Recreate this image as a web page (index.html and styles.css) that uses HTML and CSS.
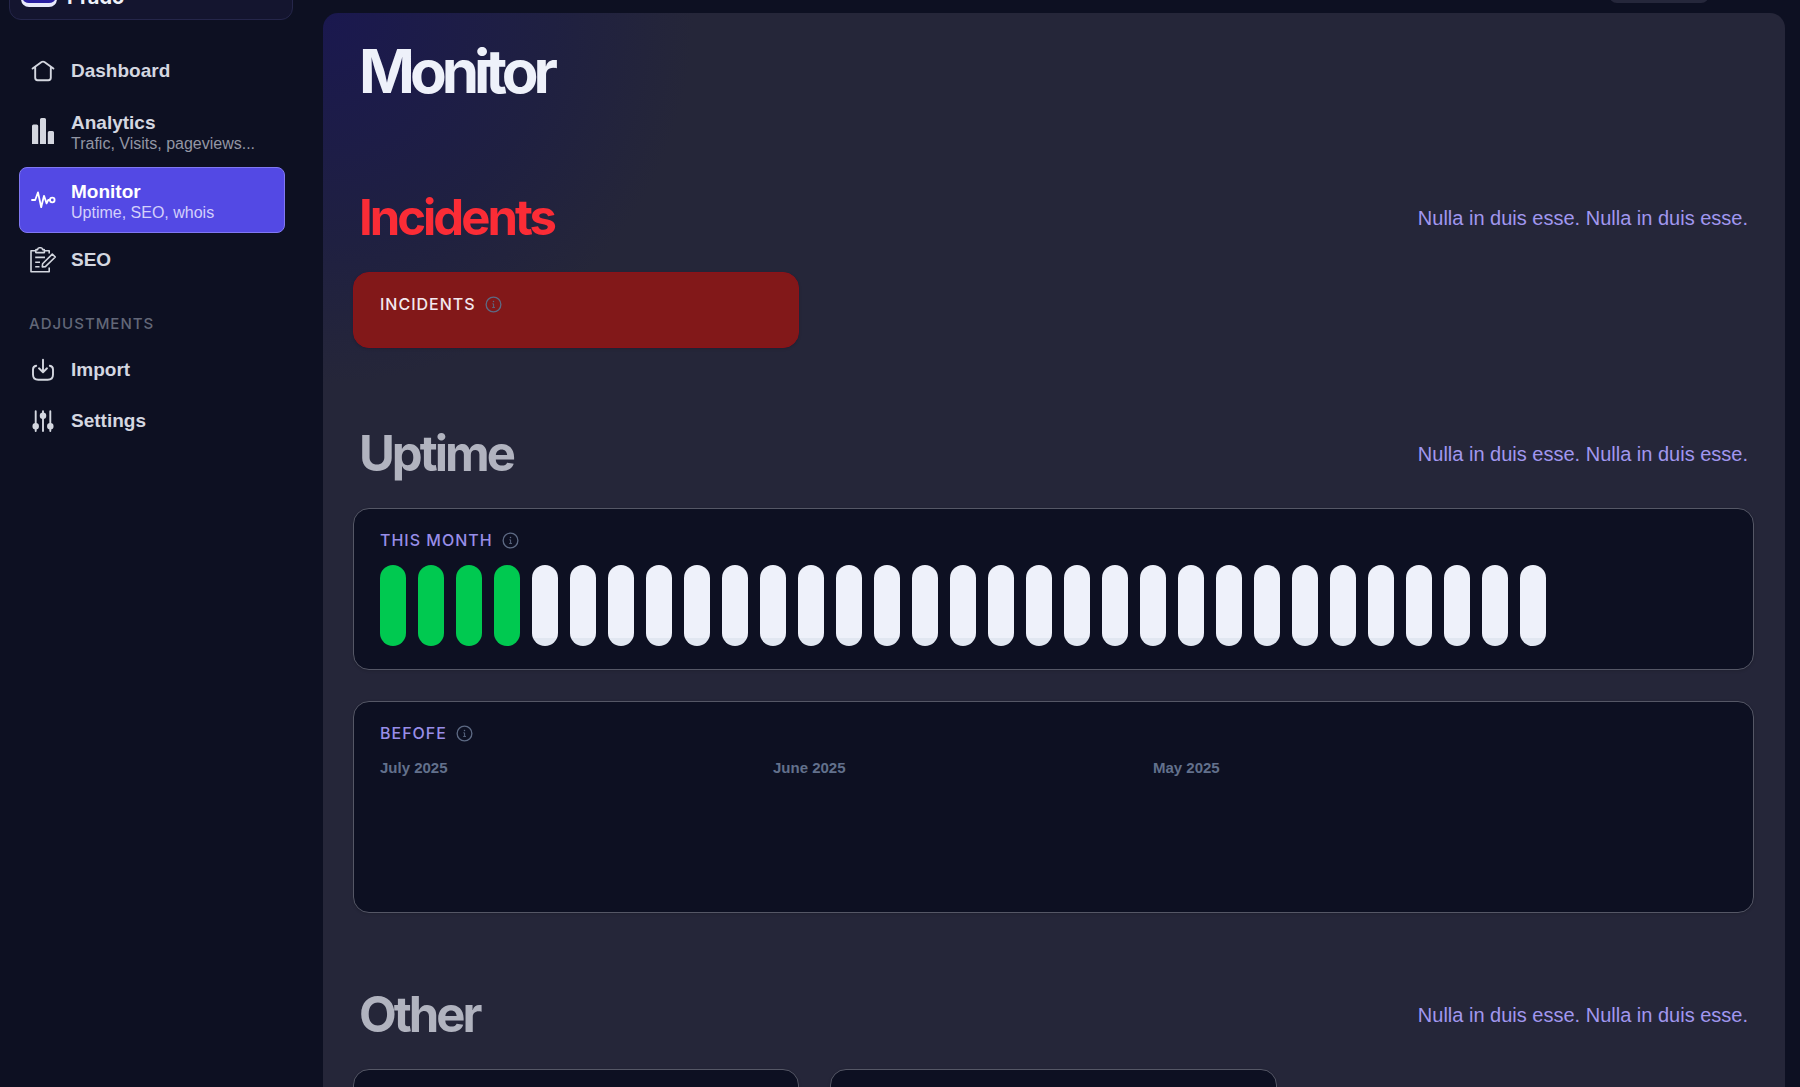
FILE: index.html
```html
<!DOCTYPE html>
<html lang="en">
<head>
<meta charset="utf-8">
<meta name="viewport" content="width=device-width, initial-scale=1">
<title>Monitor</title>
<link rel="stylesheet" href="styles.css">
</head>
<body>
<svg class="sprite" aria-hidden="true">
  <symbol id="info" viewBox="0 0 18 18">
    <circle cx="9" cy="9" r="7.8" fill="none" stroke="currentColor" stroke-width="1.4"/>
    <circle cx="9" cy="5.9" r=".8" fill="currentColor"/>
    <path d="M7.8 8.3H9.1V12M7.6 12.1H10.6" fill="none" stroke="currentColor" stroke-width="1"/>
  </symbol>
</svg>
<div class="app">
  <aside class="sidebar">
    <div class="brand">
      <span class="brand-logo"></span>
      <span class="brand-name">Prado</span>
    </div>
    <nav class="nav">
      <a class="nav-item" href="#">
        <svg class="icon" viewBox="0 0 26 26" fill="none" stroke="currentColor" stroke-width="1.9" stroke-linecap="round" stroke-linejoin="round"><path d="M2.6 10.6 11.6 4.1Q13 3.1 14.4 4.1L23.4 10.6M5.2 9V19.8Q5.2 22.2 7.6 22.2H18.4Q20.8 22.2 20.8 19.8V9"/></svg>
        <span class="nav-text"><span class="nav-title">Dashboard</span></span>
      </a>
      <a class="nav-item nav-item-tall" href="#">
        <svg class="icon" viewBox="0 0 26 26" fill="currentColor"><path d="M2 26V8Q2 6.5 3.5 6.5H6.7Q8.2 6.5 8.2 8V26ZM10 26V1.5Q10 0 11.5 0H14.5Q16 0 16 1.5V26ZM17.8 26V14.5Q17.8 13 19.3 13H22.5Q24 13 24 14.5V26Z"/></svg>
        <span class="nav-text"><span class="nav-title">Analytics</span><span class="nav-sub">Trafic, Visits, pageviews...</span></span>
      </a>
      <a class="nav-item nav-item-tall nav-item-active" href="#" aria-current="page">
        <svg class="icon" viewBox="0 0 26 26" fill="none" stroke="currentColor" stroke-width="1.8" stroke-linecap="round" stroke-linejoin="round"><path d="M2 13H5.2L8 5.4 11.2 20.2 14 8.8 16.6 16.4 18.2 13H19.8"/><circle cx="22.3" cy="13" r="2.3"/></svg>
        <span class="nav-text"><span class="nav-title">Monitor</span><span class="nav-sub">Uptime, SEO, whois</span></span>
      </a>
      <a class="nav-item" href="#">
        <svg class="icon" viewBox="0 0 26 26" fill="none" stroke="currentColor" stroke-width="1.6" stroke-linejoin="round"><path d="M5.5 3.7H1V24.8H19.2V20.5M14.5 3.7H19.2V6.5"/><path d="M5.8 5.6V3.2Q5.8 2.6 6.4 2.6H7.6Q7.8.8 9.2.8H11Q12.4.8 12.6 2.6H13.8Q14.4 2.6 14.4 3.2V5.6Z"/><path d="M5.2 10.4H15M5.2 15.2H10M5.2 19.8H9.5M12.3 19.9 12.6 16.8 22.3 7.1 25.3 10 15.4 19.6Z"/></svg>
        <span class="nav-text"><span class="nav-title">SEO</span></span>
      </a>
      <h2 class="nav-label">Adjustments</h2>
      <a class="nav-item" href="#">
        <svg class="icon" viewBox="0 0 26 26" fill="none" stroke="currentColor" stroke-width="1.9" stroke-linecap="round" stroke-linejoin="round"><path d="M13 2.8V14.8M9 11.3 13 15.2 17 11.3M6.2 8.8Q3 9.3 3 12.5V17.5Q3 22.8 8.3 22.8H17.7Q23 22.8 23 17.5V12.5Q23 9.3 19.8 8.8"/></svg>
        <span class="nav-text"><span class="nav-title">Import</span></span>
      </a>
      <a class="nav-item" href="#">
        <svg class="icon" viewBox="0 0 26 26" fill="currentColor" stroke="currentColor" stroke-width="1.9" stroke-linecap="round"><path d="M5.7 3.2V23M13 3.2V23M20.3 3.2V23"/><circle cx="5.7" cy="18.2" r="2.3"/><circle cx="13" cy="7.8" r="2.3"/><circle cx="20.3" cy="18.2" r="2.3"/></svg>
        <span class="nav-text"><span class="nav-title">Settings</span></span>
      </a>
    </nav>
  </aside>

  <div class="content">
    <div class="topbar"><button class="chip" type="button" aria-label="Account"></button></div>
    <main class="panel">
      <h1 class="page-title">Monitor</h1>

      <section class="section">
        <header class="section-head">
          <h2 class="section-title section-title-alert">Incidents</h2>
          <p class="section-note">Nulla in duis esse. Nulla in duis esse.</p>
        </header>
        <div class="card-row">
          <article class="card card-alert">
            <h3 class="card-label">Incidents <svg class="info"><use href="#info"/></svg></h3>
          </article>
        </div>
      </section>

      <section class="section">
        <header class="section-head">
          <h2 class="section-title">Uptime</h2>
          <p class="section-note">Nulla in duis esse. Nulla in duis esse.</p>
        </header>
        <div class="card-stack">
          <article class="card">
            <h3 class="card-label">This month <svg class="info"><use href="#info"/></svg></h3>
            <div class="days">
              <i class="day day-up"></i><i class="day day-up"></i><i class="day day-up"></i><i class="day day-up"></i>
              <i class="day"></i><i class="day"></i><i class="day"></i><i class="day"></i><i class="day"></i><i class="day"></i><i class="day"></i><i class="day"></i><i class="day"></i>
              <i class="day"></i><i class="day"></i><i class="day"></i><i class="day"></i><i class="day"></i><i class="day"></i><i class="day"></i><i class="day"></i><i class="day"></i>
              <i class="day"></i><i class="day"></i><i class="day"></i><i class="day"></i><i class="day"></i><i class="day"></i><i class="day"></i><i class="day"></i><i class="day"></i>
            </div>
          </article>
          <article class="card">
            <h3 class="card-label">Befofe <svg class="info"><use href="#info"/></svg></h3>
            <div class="months">
              <h4 class="month">July 2025</h4>
              <h4 class="month">June 2025</h4>
              <h4 class="month">May 2025</h4>
            </div>
          </article>
        </div>
      </section>

      <section class="section">
        <header class="section-head">
          <h2 class="section-title">Other</h2>
          <p class="section-note">Nulla in duis esse. Nulla in duis esse.</p>
        </header>
        <div class="card-row">
          <article class="card card-empty"></article>
          <article class="card card-empty"></article>
        </div>
      </section>
    </main>
  </div>
</div>
</body>
</html>
```
FILE: styles.css
```css
* { box-sizing: border-box; }

body, h1, h2, h3, h4, p { margin: 0; }

body {
  background: #0d1022;
  color: #d4d7e0;
  font-family: "Liberation Sans", Arial, sans-serif;
}

.sprite { position: absolute; width: 0; height: 0; }

.app {
  display: flex;
  height: 100vh;
  overflow: hidden;
}

/* Sidebar */
.sidebar {
  flex: 0 0 323px;
  padding: 0 30px 0 9px;
}

.brand {
  display: flex;
  align-items: flex-end;
  gap: 10px;
  height: 64px;
  margin-top: -44px;
  padding: 0 11px 12px;
  border: 1px solid #25264a;
  border-radius: 12px;
  background: #14152f;
}

.brand-logo {
  width: 36px;
  height: 36px;
  border: 2px solid #e8eafa;
  border-bottom-width: 4px;
  border-radius: 8px;
  background: #2a20a0;
}

.brand-name {
  font: 700 20px/20px Inter, sans-serif;
  color: #eef1fa;
}

.nav {
  display: flex;
  flex-direction: column;
  gap: 3px;
  margin-top: 27px;
  padding: 0 8px 0 10px;
}

.nav-item {
  display: flex;
  align-items: center;
  gap: 15px;
  min-height: 48px;
  padding: 0 10px;
  border: 1px solid transparent;
  border-radius: 8px;
  color: #d4d7e0;
  text-decoration: none;
}

.nav-item-tall { min-height: 66px; }

.nav-item-tall .nav-text { padding-top: 4px; }

.nav-item-active {
  border-color: #8078f2;
  background: #5349e4;
  color: #fff;
}

.icon { flex: none; width: 26px; height: 26px; }

.nav-text { display: flex; flex-direction: column; }

.nav-title { font-size: 19px; font-weight: 700; line-height: 22px; }

.nav-sub { font-size: 16px; line-height: 20px; color: #9396a4; }

.nav-item-active .nav-sub { color: #d3d0fb; }

.nav-label {
  margin: 25px 0 7px;
  padding: 0 10px;
  font: 500 15px/24px Inter, sans-serif;
  letter-spacing: 1px;
  text-transform: uppercase;
  color: #626778;
}

/* Main column */
.content {
  display: flex;
  flex: 1;
  flex-direction: column;
  min-width: 0;
  padding-right: 15px;
}

.topbar {
  display: flex;
  flex: none;
  justify-content: flex-end;
  margin-top: -37px;
  padding: 0 76px 10px 0;
}

.chip {
  width: 100px;
  height: 40px;
  border: 0;
  border-radius: 8px;
  background: #25273b;
}

.panel {
  flex: 1 0 auto;
  padding: 28px 31px 32px 30px;
  border-radius: 15px;
  background: radial-gradient(circle at 0 0, #1a184f 0, #1f2041 230px, #252639 370px) #252639;
}

.page-title {
  margin-bottom: 87px;
  padding: 0 6px;
  font: 700 60px/60px Inter, sans-serif;
  letter-spacing: -5px;
  color: #eef1fa;
}

.section + .section { margin-top: 72px; }

.section-head {
  display: flex;
  align-items: center;
  justify-content: space-between;
  margin-bottom: 24px;
  padding: 0 6px;
}

.section-title {
  font: 700 49px/60px Inter, sans-serif;
  letter-spacing: -3px;
  color: #b1b3bf;
}

.section-title-alert { color: #fb2c36; }

.section-note { font-size: 20px; line-height: 28px; color: #a197ef; }

.card-row {
  display: grid;
  grid-template-columns: repeat(3, 1fr);
  gap: 31px;
  padding-bottom: 4px;
}

.card-stack { display: grid; gap: 31px; }

.card {
  padding: 19px 26px 23px;
  border: 1px solid #555766;
  border-radius: 16px;
  background: #0d1022;
  box-shadow: 0 1px 3px rgba(0, 0, 0, .15);
}

.card-alert { border-color: #8c1219; background: #821819; }

.card-empty { min-height: 162px; }

.card-label {
  display: flex;
  align-items: center;
  gap: 9px;
  margin-bottom: 8px;
  font: 500 16px/24px Inter, sans-serif;
  letter-spacing: 1px;
  text-transform: uppercase;
  color: #988ee8;
}

.card-alert .card-label { color: #f3e9f0; }

.info { width: 17px; height: 17px; color: #5d6a84; }

.days { display: flex; gap: 12px; padding-top: 5px; }

.day {
  width: 26px;
  height: 81px;
  border-radius: 13px;
  background: linear-gradient(#eef1fa 73px, #e1e7f1 73px);
}

.day-up { background: #00c950; }

.months {
  display: grid;
  grid-template-columns: 393px 380px 1fr;
  min-height: 136px;
  padding-top: 5px;
}

.month { font-size: 15px; line-height: 20px; color: #62708c; }
```
